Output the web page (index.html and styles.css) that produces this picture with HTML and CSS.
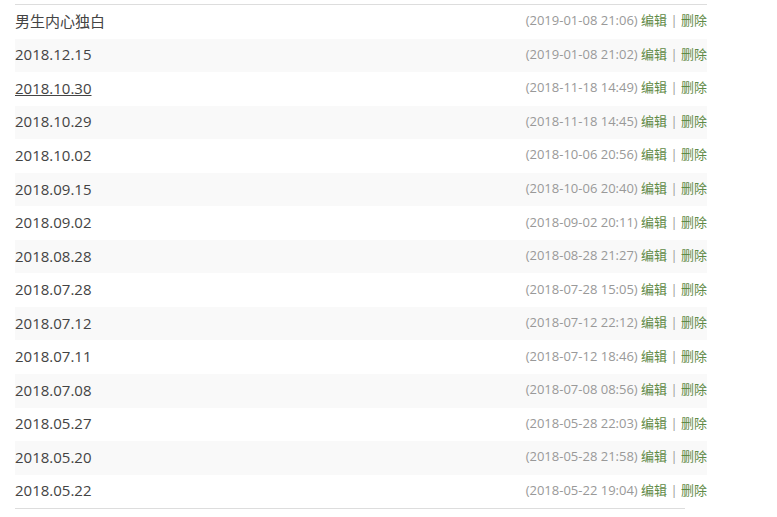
FILE: index.html
```html
<!DOCTYPE html>
<html lang="zh-CN">
<head>
<meta charset="utf-8">
<title>列表</title>
<link rel="stylesheet" href="styles.css">
</head>
<body>
<div class="wrap">
<ul class="posts">
<li class="row"><a class="title" href="#">男生内心独白</a><span class="meta">(2019-01-08 21:06) <a class="act" href="#">编辑</a> | <a class="act" href="#">删除</a></span></li>
<li class="row"><a class="title" href="#">2018.12.15</a><span class="meta">(2019-01-08 21:02) <a class="act" href="#">编辑</a> | <a class="act" href="#">删除</a></span></li>
<li class="row"><a class="title hover" href="#">2018.10.30</a><span class="meta">(2018-11-18 14:49) <a class="act" href="#">编辑</a> | <a class="act" href="#">删除</a></span></li>
<li class="row"><a class="title" href="#">2018.10.29</a><span class="meta">(2018-11-18 14:45) <a class="act" href="#">编辑</a> | <a class="act" href="#">删除</a></span></li>
<li class="row"><a class="title" href="#">2018.10.02</a><span class="meta">(2018-10-06 20:56) <a class="act" href="#">编辑</a> | <a class="act" href="#">删除</a></span></li>
<li class="row"><a class="title" href="#">2018.09.15</a><span class="meta">(2018-10-06 20:40) <a class="act" href="#">编辑</a> | <a class="act" href="#">删除</a></span></li>
<li class="row"><a class="title" href="#">2018.09.02</a><span class="meta">(2018-09-02 20:11) <a class="act" href="#">编辑</a> | <a class="act" href="#">删除</a></span></li>
<li class="row"><a class="title" href="#">2018.08.28</a><span class="meta">(2018-08-28 21:27) <a class="act" href="#">编辑</a> | <a class="act" href="#">删除</a></span></li>
<li class="row"><a class="title" href="#">2018.07.28</a><span class="meta">(2018-07-28 15:05) <a class="act" href="#">编辑</a> | <a class="act" href="#">删除</a></span></li>
<li class="row"><a class="title" href="#">2018.07.12</a><span class="meta">(2018-07-12 22:12) <a class="act" href="#">编辑</a> | <a class="act" href="#">删除</a></span></li>
<li class="row"><a class="title" href="#">2018.07.11</a><span class="meta">(2018-07-12 18:46) <a class="act" href="#">编辑</a> | <a class="act" href="#">删除</a></span></li>
<li class="row"><a class="title" href="#">2018.07.08</a><span class="meta">(2018-07-08 08:56) <a class="act" href="#">编辑</a> | <a class="act" href="#">删除</a></span></li>
<li class="row"><a class="title" href="#">2018.05.27</a><span class="meta">(2018-05-28 22:03) <a class="act" href="#">编辑</a> | <a class="act" href="#">删除</a></span></li>
<li class="row"><a class="title" href="#">2018.05.20</a><span class="meta">(2018-05-28 21:58) <a class="act" href="#">编辑</a> | <a class="act" href="#">删除</a></span></li>
<li class="row"><a class="title" href="#">2018.05.22</a><span class="meta">(2018-05-22 19:04) <a class="act" href="#">编辑</a> | <a class="act" href="#">删除</a></span></li>
</ul>
<div class="bottom-line"></div>
</div>
</body>
</html>
```
FILE: styles.css
```css
html, body {
  margin: 0;
  padding: 0;
  background: #fff;
}
body {
  font-family: "Open Sans", "Noto Sans CJK SC", sans-serif;
}
.wrap {
  padding: 4px 0 0 15px;
  width: 692px;
}
.posts {
  list-style: none;
  margin: 0;
  padding: 0;
  border-top: 1px solid #ddd;
}
.row {
  display: flex;
  justify-content: space-between;
  align-items: center;
  box-sizing: border-box;
  height: 33.55px;
  padding-bottom: 2px;
  background: #fff;
}
.row:nth-child(even) {
  background: #f9f9f9;
}
.title {
  font-size: 15px;
  color: #444;
  text-decoration: none;
}
.title.hover {
  text-decoration: underline;
}
.meta {
  font-size: 13px;
  color: #999;
  padding-bottom: 2px;
}
.act {
  color: #5f8a46;
  text-decoration: none;
}
.bottom-line {
  width: 670px;
  height: 1px;
  background: #ddd;
}
```
